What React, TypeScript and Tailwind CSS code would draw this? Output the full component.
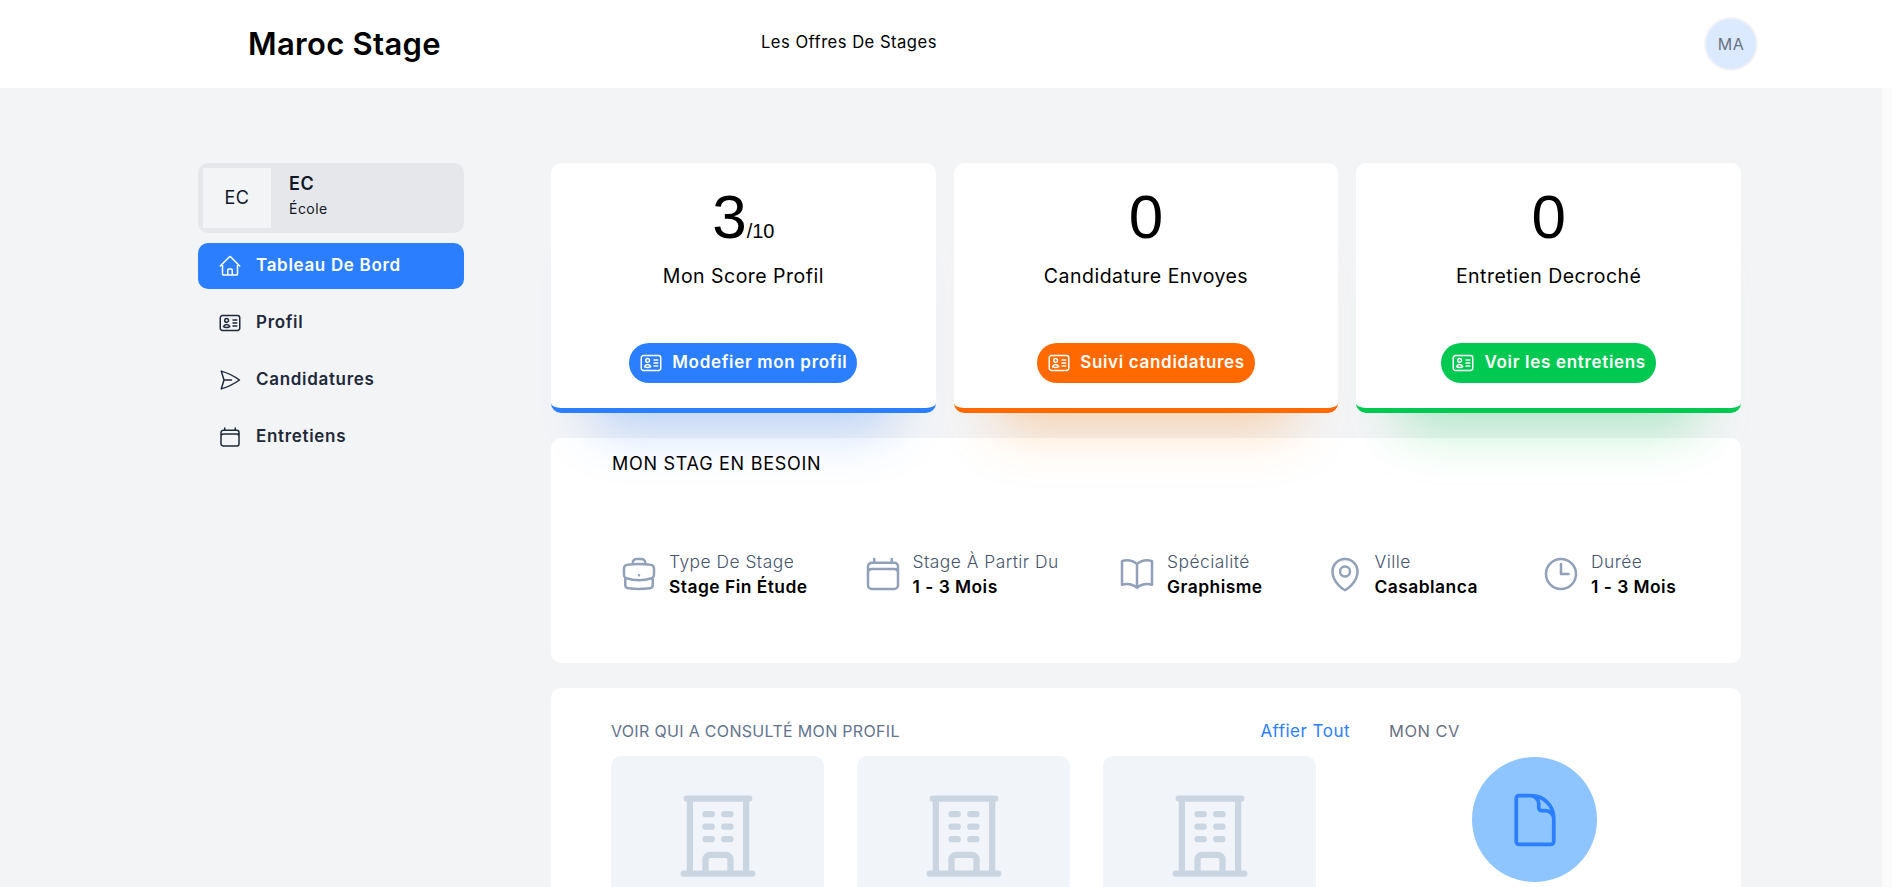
import {
  HiOutlineBookOpen,
  HiOutlineBriefcase,
  HiOutlineBuildingOffice,
  HiOutlineCalendar,
  HiOutlineClock,
  HiOutlineDocument,
  HiOutlineHome,
  HiOutlineIdentification,
  HiOutlineMapPin,
  HiOutlinePaperAirplane,
} from "react-icons/hi2";

const navItems = [
  { label: "Profil", icon: HiOutlineIdentification },
  { label: "Candidatures", icon: HiOutlinePaperAirplane },
  { label: "Entretiens", icon: HiOutlineCalendar },
];

const stats = [
  {
    value: "3",
    suffix: "/10",
    label: "Mon Score Profil",
    action: "Modefier mon profil",
    card: "border-blue-500 shadow-[0_60px_50px_-45px_rgba(43,127,255,0.3)]",
    button: "bg-blue-500",
  },
  {
    value: "0",
    label: "Candidature Envoyes",
    action: "Suivi candidatures",
    card: "border-orange-500 shadow-[0_60px_50px_-45px_rgba(255,150,50,0.38)]",
    button: "bg-orange-500",
  },
  {
    value: "0",
    label: "Entretien Decroché",
    action: "Voir les entretiens",
    card: "border-green-500 shadow-[0_60px_50px_-45px_rgba(0,201,80,0.3)]",
    button: "bg-green-500",
  },
];

const needs = [
  { label: "Type De Stage", value: "Stage Fin Étude", icon: HiOutlineBriefcase, width: "w-[186px]" },
  { label: "Stage À Partir Du", value: "1 - 3 Mois", icon: HiOutlineCalendar, width: "w-[197px]" },
  { label: "Spécialité", value: "Graphisme", icon: HiOutlineBookOpen, width: "w-[150px]" },
  { label: "Ville", value: "Casablanca", icon: HiOutlineMapPin, width: "w-[159px]" },
  { label: "Durée", value: "1 - 3 Mois", icon: HiOutlineClock, width: "w-[131px]" },
];

const App = () => {
  return (
    <div className="flex h-screen overflow-hidden bg-white font-['Inter',sans-serif] tracking-[0.03em]">
      <div className="w-[1882px] shrink-0">
        <header className="flex h-[88px] items-center bg-white">
          <div className="ml-[248px] w-[513px] text-[31px] font-semibold tracking-[0.01em] text-black">
            Maroc Stage
          </div>
          <div className="pb-[4px] text-[16.6px] text-black">Les Offres De Stages</div>
          <div className="ml-auto mr-[124px] flex h-[54px] w-[54px] items-center justify-center rounded-full border-2 border-gray-100 bg-blue-100 text-base text-gray-500">
            MA
          </div>
        </header>

        <div className="flex min-h-[799px] bg-gray-100 pl-[198px] pt-[75px]">
          <aside className="w-[266px] shrink-0">
            <div className="flex h-[70px] items-center rounded-[10px] bg-gray-200 p-[5px]">
              <div className="flex h-[60px] w-[68px] items-center justify-center bg-gray-100 text-lg text-gray-900">
                EC
              </div>
              <div className="ml-[18px] pb-[3px]">
                <div className="text-lg font-semibold leading-6 text-gray-900">EC</div>
                <div className="text-sm leading-[25px] text-gray-900">École</div>
              </div>
            </div>
            <div className="mt-[10px] flex h-[46px] items-center gap-[14px] rounded-[10px] bg-blue-500 pl-5 text-[17px] font-semibold tracking-[0.04em] text-white">
              <HiOutlineHome size={24} />
              Tableau De Bord
            </div>
            <nav className="mt-[5px]">
              {navItems.map((item) => (
                <div
                  key={item.label}
                  className="flex h-[57px] items-center gap-[14px] pl-5 text-[17px] font-semibold tracking-[0.04em] text-gray-800"
                >
                  <item.icon size={24} />
                  {item.label}
                </div>
              ))}
            </nav>
          </aside>

          <main className="ml-[87px] w-[1190px] shrink-0">
            <div className="grid grid-cols-3 gap-[18px]">
              {stats.map((stat) => (
                <div
                  key={stat.label}
                  className={`flex h-[250px] flex-col items-center rounded-[10px] border-b-[5px] bg-white pt-[16px] ${stat.card}`}
                >
                  <div className="flex items-baseline font-['Liberation_Sans',sans-serif] tracking-normal text-black">
                    <span className="text-[62px] leading-[76px]">{stat.value}</span>
                    {stat.suffix && <span className="text-xl">{stat.suffix}</span>}
                  </div>
                  <div className="mt-[7px] text-[19.5px] leading-7 text-black">{stat.label}</div>
                  <button
                    className={`mt-[53px] flex h-10 items-center gap-[9px] rounded-full px-[10px] text-[17px] font-semibold tracking-[0.04em] text-white ${stat.button}`}
                  >
                    <HiOutlineIdentification size={24} />
                    {stat.action}
                  </button>
                </div>
              ))}
            </div>

            <section className="mt-[25px] h-[225px] rounded-[10px] bg-white">
              <h2 className="pl-[61px] pt-[1px] text-lg leading-[50px] tracking-[0.04em] text-black">
                MON STAG EN BESOIN
              </h2>
              <div className="mt-[60px] flex justify-between pl-[68px] pr-[69px]">
                {needs.map((need) => (
                  <div key={need.label} className={`flex items-center gap-[10px] ${need.width}`}>
                    <need.icon size={40} className="shrink-0 text-slate-400" />
                    <div>
                      <div className="whitespace-nowrap text-[17.4px] font-light leading-[25px] text-slate-600">
                        {need.label}
                      </div>
                      <div className="whitespace-nowrap text-[17.4px] font-semibold leading-[25px] text-black">
                        {need.value}
                      </div>
                    </div>
                  </div>
                ))}
              </div>
            </section>

            <section className="mt-[25px] flex rounded-[10px] bg-white pb-8 pl-[60px] pt-[30px]">
              <div className="w-[739px]">
                <div className="flex items-center justify-between">
                  <span className="text-base leading-[26px] tracking-[0.02em] text-slate-500">
                    VOIR QUI A CONSULTÉ MON PROFIL
                  </span>
                  <span className="text-[17px] leading-[26px] text-blue-500">Affier Tout</span>
                </div>
                <div className="mt-[12px] flex gap-[33px]">
                  {[0, 1, 2].map((tile) => (
                    <div
                      key={tile}
                      className="flex h-[240px] w-[213px] justify-center rounded-[10px] bg-slate-100 pt-[30px]"
                    >
                      <HiOutlineBuildingOffice size={100} className="text-slate-300" />
                    </div>
                  ))}
                </div>
              </div>
              <div className="ml-[39px] w-[290px]">
                <div className="text-[16.5px] leading-[26px] text-gray-500">MON CV</div>
                <div className="ml-[83px] mt-[13px] flex h-[125px] w-[125px] items-center justify-center rounded-full bg-blue-300">
                  <HiOutlineDocument size={60} className="text-blue-500" />
                </div>
              </div>
            </section>
          </main>
        </div>
      </div>
      <div className="mt-[88px] w-[10px] bg-[#fbfbfb]" />
    </div>
  );
};

export default App;
